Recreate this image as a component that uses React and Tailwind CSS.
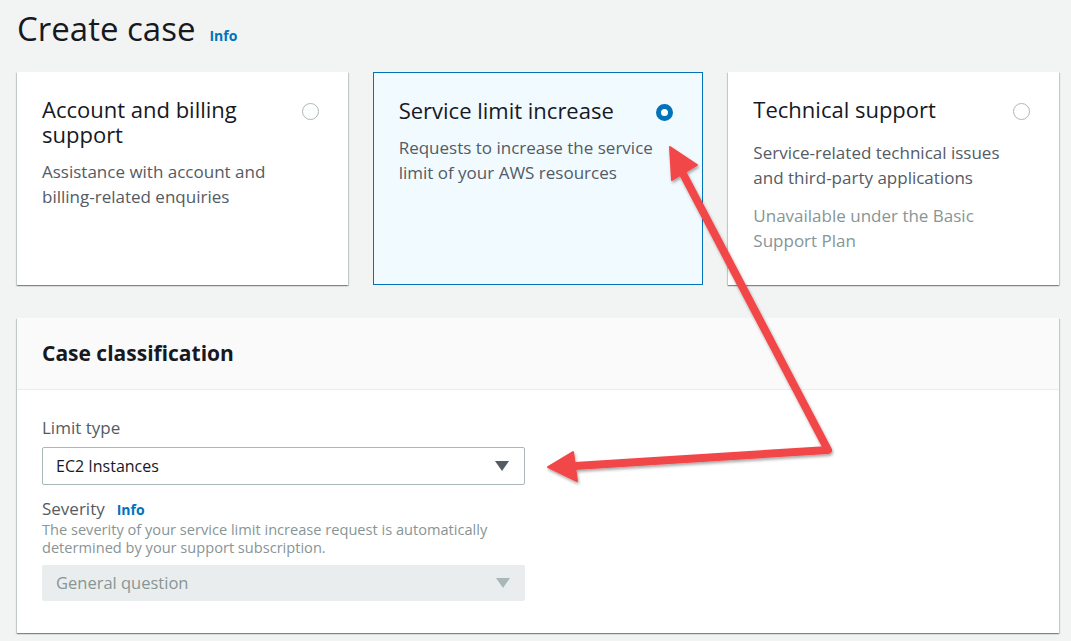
import React from "react";

const font = { fontFamily: '"Open Sans", "Noto Sans", Arial, sans-serif' };

function Radio({ checked }) {
  if (checked) {
    return <span className="block w-[17px] h-[17px] rounded-full border-[5px] border-[#0073bb] bg-white shrink-0" />;
  }
  return <span className="block w-[17px] h-[17px] rounded-full border-[1.5px] border-[#aab7b8] bg-white shrink-0" />;
}

function Card({ title, desc, note, checked, descGap = "mt-[12px]" }) {
  return (
    <div
      className={
        "h-[213px] px-[25px] pt-[25px] " +
        (checked
          ? "bg-[#f1faff] border border-[#0073bb]"
          : "bg-white shadow-[0_1px_1px_0_rgba(0,28,36,0.3),1px_1px_1px_0_rgba(0,28,36,0.15),-1px_1px_1px_0_rgba(0,28,36,0.15)]")
      }
    >
      <div className="flex items-start justify-between gap-4">
        <h3 className="text-[22px] leading-[25px] text-[#16191f]">{title}</h3>
        <div className="pt-[6px] pr-[4px]">
          <Radio checked={checked} />
        </div>
      </div>
      <p className={descGap + " text-[17px] leading-[25px] text-[#545b64]"}>{desc}</p>
      {note && <p className="mt-[13px] text-[17px] leading-[25px] text-[#879596]">{note}</p>}
    </div>
  );
}

function Caret({ color }) {
  return (
    <svg width="14" height="10" viewBox="0 0 14 10">
      <path d="M0 0 L14 0 L7 10 Z" fill={color} />
    </svg>
  );
}

export default function App() {
  return (
    <div className="relative w-[1071px] h-[641px] bg-[#f2f3f3] overflow-hidden" style={font}>
      <div className="ml-[17px] w-[1042px]">
        {/* title */}
        <div className="flex items-baseline pt-[6px] h-[72px]">
          <h1 className="text-[33px] leading-[46px] text-[#16191f]">Create case</h1>
          <a className="ml-[14px] text-[14px] font-bold text-[#0073bb]">Info</a>
        </div>

        {/* case type cards */}
        <div className="grid grid-cols-3 gap-[25px]">
          <Card
            title="Account and billing support"
            desc={
              <>
                Assistance with account and <span className="whitespace-nowrap">billing-related</span> enquiries
              </>
            }
          />
          <Card checked title="Service limit increase" desc="Requests to increase the service limit of your AWS resources" />
          <Card
            title="Technical support"
            desc="Service-related technical issues and third-party applications"
            note="Unavailable under the Basic Support Plan"
            descGap="mt-[18px]"
          />
        </div>

        {/* case classification */}
        <div className="mt-[33px] h-[315px] bg-white shadow-[0_1px_1px_0_rgba(0,28,36,0.3),1px_1px_1px_0_rgba(0,28,36,0.15),-1px_1px_1px_0_rgba(0,28,36,0.15)]">
          <div className="h-[72px] bg-[#fafafa] border-b border-[#eaeded] px-[25px] flex items-center">
            <h2 className="text-[21px] font-bold text-[#16191f]">Case classification</h2>
          </div>
          <div className="px-[25px] pt-[27px]">
            <label className="block text-[17px] leading-[22px] text-[#545b64]">Limit type</label>
            <div className="mt-[8px] w-[483px] h-[38px] border border-[#aab7b8] rounded-[2px] bg-white flex items-center justify-between pl-[13px] pr-[15px]">
              <span className="text-[16px] text-[#16191f]">EC2 Instances</span>
              <Caret color="#545b64" />
            </div>

            <div className="mt-[13px] flex items-baseline">
              <label className="text-[17px] leading-[22px] text-[#545b64]">Severity</label>
              <a className="ml-[12px] text-[14px] font-bold text-[#0073bb]">Info</a>
            </div>
            <p className="text-[14.6px] leading-[18px] text-[#879596] w-[480px]">
              The severity of your service limit increase request is automatically determined by your support subscription.
            </p>
            <div className="mt-[9px] w-[483px] h-[36px] rounded-[2px] bg-[#eaeded] flex items-center justify-between pl-[14px] pr-[15px]">
              <span className="text-[16.5px] text-[#879596]">General question</span>
              <Caret color="#aab7b8" />
            </div>
          </div>
        </div>
      </div>

      {/* annotation arrow */}
      <svg className="absolute inset-0 pointer-events-none" width="1071" height="641" viewBox="0 0 1071 641">
        <defs>
          <filter id="sh" x="-10%" y="-10%" width="120%" height="120%">
            <feDropShadow dx="1" dy="2" stdDeviation="1.5" floodColor="#000" floodOpacity="0.35" />
          </filter>
        </defs>
        <g filter="url(#sh)" fill="#f2474a" stroke="#f2474a">
          <polyline
            points="680,168 828,450 575,466"
            fill="none"
            strokeWidth="8"
            strokeLinejoin="round"
          />
          <polygon points="670,147 697,165 672,180" strokeWidth="2" strokeLinejoin="round" />
          <polygon points="548,467 573,452 577,481" strokeWidth="2" strokeLinejoin="round" />
        </g>
      </svg>
    </div>
  );
}
